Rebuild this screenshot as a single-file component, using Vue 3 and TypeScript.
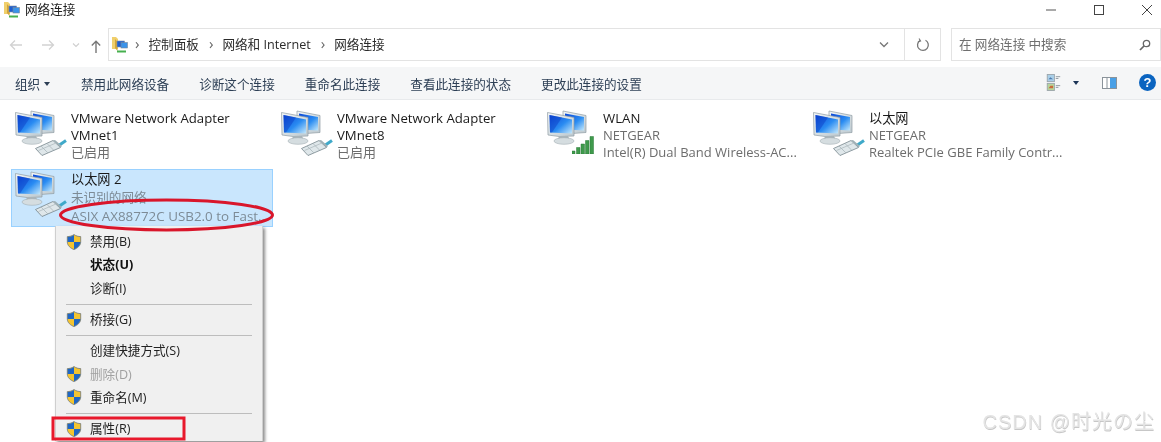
<script setup lang="ts">
interface Net { name: string[]; lines: string[]; kind: 'wired' | 'wifi'; selected?: boolean }
const nets: Net[] = [
  { name: ['VMware Network Adapter', 'VMnet1'], lines: ['已启用'], kind: 'wired' },
  { name: ['VMware Network Adapter', 'VMnet8'], lines: ['已启用'], kind: 'wired' },
  { name: ['WLAN'], lines: ['NETGEAR', 'Intel(R) Dual Band Wireless-AC...'], kind: 'wifi' },
  { name: ['以太网'], lines: ['NETGEAR', 'Realtek PCIe GBE Family Contr...'], kind: 'wired' },
  { name: ['以太网 2'], lines: ['未识别的网络', 'ASIX AX88772C USB2.0 to Fast...'], kind: 'wired', selected: true },
]
const tools = ['禁用此网络设备', '诊断这个连接', '重命名此连接', '查看此连接的状态', '更改此连接的设置']
type Row = { sep: true } | { sep?: false; label: string; shield?: boolean; bold?: boolean; disabled?: boolean }
const menu: Row[] = [
  { label: '禁用(B)', shield: true },
  { label: '状态(U)', bold: true },
  { label: '诊断(I)' },
  { sep: true },
  { label: '桥接(G)', shield: true },
  { sep: true },
  { label: '创建快捷方式(S)' },
  { label: '删除(D)', shield: true, disabled: true },
  { label: '重命名(M)', shield: true },
  { sep: true },
  { label: '属性(R)', shield: true },
]
</script>

<template>
  <div class="win">
    <svg width="0" height="0" class="defs">
      <defs>
        <linearGradient id="scr" x1="0" y1="0" x2="1" y2="1">
          <stop offset="0" stop-color="#0a45d8" />
          <stop offset="0.55" stop-color="#2a8cf2" />
          <stop offset="1" stop-color="#c4e8fb" />
        </linearGradient>
        <linearGradient id="bez" x1="0" y1="0" x2="1" y2="1">
          <stop offset="0" stop-color="#f2f6f8" />
          <stop offset="1" stop-color="#bcc8ce" />
        </linearGradient>
        <symbol id="pcs" viewBox="0 0 50 50">
          <path d="M17 3 40 7.500 40 24.500 26 25.500 17 23Z" fill="url(#bez)" stroke="#8f9ca3" stroke-width=".7" />
          <path d="M19 5.500 38 9 38 22.500 19 21.500Z" fill="url(#scr)" />
          <path d="M1.500 4.500 28 9.500 28 28 13 28.500 2 27Z" fill="url(#bez)" stroke="#8f9ca3" stroke-width=".7" />
          <path d="M3.500 7 26 11.500 26 25.500 4 24.500Z" fill="url(#scr)" />
          <path d="M3.500 7 16 9.500 6 24.500 4 24.500Z" fill="#0a3bc4" opacity=".45" />
          <path d="M13 28 22 28 23.500 31.500 12 31.500Z" fill="#aab5ba" />
          <ellipse cx="18" cy="33" rx="10" ry="3.300" fill="#d5dde0" stroke="#a3aeb3" stroke-width=".6" />
        </symbol>
        <symbol id="plugicon" viewBox="0 0 32 17">
          <path d="M23 7 31 1.500" stroke="#3fa9c9" stroke-width="3" fill="none" />
          <path d="M.5 9.500 18 1.500 25.500 8.500 7 16.500Z" fill="#dfe7ea" stroke="#76858b" stroke-width=".8" />
          <path d="M6 7 13 14M12 4.500 19 11.500" stroke="#a3b0b5" stroke-width=".7" fill="none" />
          <path d="M3.500 11.500 20.500 4.200" stroke="#aab6ba" stroke-width=".7" fill="none" />
          <path d="M18 1.500 25.500 8.500 27 7 20 1Z" fill="#9fb0b6" />
        </symbol>
        <symbol id="bars" viewBox="0 0 22 18">
          <path d="M0 15h3v3H0ZM4.500 11.500h3.500V18H4.500ZM9 8h3.500v10H9ZM13.500 4.500H17V18h-3.500ZM18 .5h3.500V18H18Z" fill="#3f9a4c" stroke="#2c7a39" stroke-width=".5" />
        </symbol>
        <symbol id="shield" viewBox="0 0 16 16">
          <path d="M8 .5C6 2 3.500 2.600 1.300 2.600V8C1.300 11.600 4.500 14.200 8 15.600 11.500 14.200 14.700 11.600 14.700 8V2.600C12.500 2.600 10 2 8 .5Z" fill="#f4c430" stroke="#5f6b7a" stroke-width=".7" />
          <path d="M8 1V8H1.600V2.900C3.800 2.900 6.200 2.300 8 1Z" fill="#1f66c4" />
          <path d="M8 8H14.400C14.300 11.200 11.400 13.900 8 15.200Z" fill="#1f66c4" />
        </symbol>
        <symbol id="folder" viewBox="0 0 16 18">
          <path d="M0 1h4l2 2v10H0Z" fill="#f0cf6c" />
          <path d="M3 3 5.500 6v9L3 12Z" fill="#d2a53a" />
          <rect x="5" y="5" width="7.500" height="6" fill="#1f5fd0" stroke="#8793a0" stroke-width=".6" />
          <rect x="9" y="6.500" width="6.500" height="5.500" fill="#3a93ea" stroke="#7b8794" stroke-width=".6" />
          <path d="M5 15.500h9" stroke="#46b04f" stroke-width="2" />
        </symbol>
      </defs>
    </svg>

    <header class="title">
      <svg class="ticon" width="16" height="18"><use href="#folder" /></svg>
      <span class="ttext">网络连接</span>
      <div class="controls">
        <svg width="12" height="12" viewBox="0 0 12 12"><path d="M1 6h10" stroke="#555" /></svg>
        <svg width="12" height="12" viewBox="0 0 12 12"><rect x="1.500" y="1.500" width="9" height="9" fill="none" stroke="#444" /></svg>
        <svg width="12" height="12" viewBox="0 0 12 12"><path d="M1 1 11 11M11 1 1 11" stroke="#444" /></svg>
      </div>
    </header>

    <div class="addr">
      <div class="nav">
        <svg width="14" height="12" viewBox="0 0 14 12"><path d="M13 6H2M6 1.500 1.500 6 6 10.500" fill="none" stroke="#d2d2d2" stroke-width="1.300" /></svg>
        <svg width="14" height="12" viewBox="0 0 14 12"><path d="M1 6h11M8 1.500 12.500 6 8 10.500" fill="none" stroke="#d2d2d2" stroke-width="1.300" /></svg>
        <svg class="dd" width="8" height="6" viewBox="0 0 8 6"><path d="M1 1.500 4 4.500 7 1.500" fill="none" stroke="#cfcfcf" stroke-width="1.100" /></svg>
        <svg class="up" width="10" height="13" viewBox="0 0 10 13"><path d="M5 13V1.500M.8 5.500 5 1.200 9.200 5.500" fill="none" stroke="#777" stroke-width="1.400" /></svg>
      </div>
      <div class="box">
        <svg class="crumbicon" width="16" height="18"><use href="#folder" /></svg>
        <span class="chev">›</span><span>控制面板</span>
        <span class="chev">›</span><span>网络和 Internet</span>
        <span class="chev">›</span><span>网络连接</span>
        <div class="boxend">
          <svg class="down" width="10" height="7" viewBox="0 0 10 7"><path d="M1 1.500 5 5.500 9 1.500" fill="none" stroke="#777" stroke-width="1.300" /></svg>
          <div class="refresh">
            <svg width="14" height="14" viewBox="0 0 14 14"><path d="M9.500 2.300A5.400 5.400 0 1 1 4 2.500" fill="none" stroke="#777" stroke-width="1.300" /><path d="M3 .5 4.600 3 2 4" fill="none" stroke="#777" stroke-width="1.100" /></svg>
          </div>
        </div>
      </div>
      <div class="search">
        <span>在 网络连接 中搜索</span>
        <svg width="12" height="12" viewBox="0 0 12 12"><circle cx="7.500" cy="4.500" r="3.200" fill="none" stroke="#666" stroke-width="1.300" /><path d="M5 7 1 11" stroke="#666" stroke-width="1.700" /></svg>
      </div>
    </div>

    <nav class="tools">
      <span class="org">组织<i class="caret"></i></span>
      <span v-for="t in tools" :key="t">{{ t }}</span>
      <div class="toolend">
        <svg class="views" width="15" height="17" viewBox="0 0 15 19">
          <rect x=".5" y=".5" width="8" height="8" fill="#a9cfe8" stroke="#9aa4ab" />
          <path d="M2 6 4 3.500 7 6Z" fill="#4c79b0" />
          <rect x=".5" y="10.500" width="8" height="8" fill="#b7d59a" stroke="#9aa4ab" />
          <path d="M2 16 4 13h3v3Z" fill="#c96a3a" />
          <path d="M10 3h5M10 5h3M10 13h5M10 15h3" stroke="#8a939a" />
        </svg>
        <i class="caret dark"></i>
        <svg class="pane" width="15" height="12" viewBox="0 0 15 12">
          <rect x=".5" y=".5" width="14" height="11" fill="#fff" stroke="#8a939a" />
          <rect x="8" y="1" width="6" height="10" fill="#4aa0e6" />
          <path d="M5 1v10" stroke="#8a939a" />
        </svg>
        <span class="help">?</span>
      </div>
    </nav>

    <main class="grid">
      <div v-for="n in nets" :key="n.name.join()" class="item" :class="{ sel: n.selected }">
        <div class="iconbox">
          <svg width="50" height="50"><use href="#pcs" /></svg>
          <svg v-if="n.kind === 'wired'" class="plug" width="32" height="17"><use href="#plugicon" /></svg>
          <svg v-else class="wifi" width="22" height="18"><use href="#bars" /></svg>
        </div>
        <div class="txt">
          <div v-for="l in n.name" :key="l" class="nm">{{ l }}</div>
          <div v-for="l in n.lines" :key="l" class="sub">{{ l }}</div>
        </div>
      </div>
    </main>

    <div class="menu">
      <template v-for="(r, i) in menu" :key="i">
        <div v-if="r.sep" class="sep"></div>
        <div v-else class="mi" :class="{ bold: r.bold, dis: r.disabled }">
          <svg v-if="r.shield" class="sh" width="16" height="16"><use href="#shield" /></svg>
          <span>{{ r.label }}</span>
        </div>
      </template>
    </div>

    <svg class="marks" width="1161" height="442" viewBox="0 0 1161 442">
      <ellipse cx="166.500" cy="215" rx="106" ry="15" fill="none" stroke="#d9162b" stroke-width="3" />
      <rect x="53" y="418" width="131" height="21" fill="none" stroke="#e8192c" stroke-width="3" />
    </svg>

    <div class="wm">CSDN @时光の尘</div>
  </div>
</template>

<style scoped>
.win {
  position: relative;
  width: 1161px;
  height: 442px;
  overflow: hidden;
  background: #fff;
  color: #1e1e1e;
  font: 12.6px/17px "Open Sans", "Noto Sans CJK SC", sans-serif;
  filter: blur(0.4px);
}
.defs { position: absolute; }
.title {
  height: 20px;
  box-sizing: border-box;
  display: flex;
  align-items: center;
  padding: 0 0 1px 4px;
}
.ticon { margin-right: 5px; }
.controls {
  margin-left: auto;
  display: flex;
  gap: 36px;
  padding-right: 8px;
}
.addr {
  height: 47px;
  display: flex;
  padding-top: 8px;
  box-sizing: border-box;
  align-items: flex-start;
}
.nav {
  width: 108px;
  height: 33px;
  display: flex;
  align-items: center;
  padding-left: 9px;
  box-sizing: border-box;
  gap: 18px;
}
.dd { margin-left: -1px; margin-right: -7px; }
.up { margin-top: 3px; }
.box {
  width: 833px;
  height: 33px;
  box-sizing: border-box;
  border: 1px solid #e3e3e3;
  display: flex;
  align-items: center;
  padding-left: 3px;
  color: #2b2b2b;
}
.crumbicon { margin-right: 7px; }
.chev { color: #666; font-size: 15px; margin: -2px 9px 0 0; }
.box > span:not(.chev) { margin-right: 10px; }
.boxend {
  margin-left: auto;
  display: flex;
  align-items: center;
  height: 100%;
}
.down { margin-right: 15px; }
.refresh {
  width: 35px;
  height: 100%;
  border-left: 1px solid #e3e3e3;
  display: flex;
  align-items: center;
  justify-content: center;
}
.search {
  margin-left: 10px;
  flex: 1;
  height: 33px;
  box-sizing: border-box;
  border: 1px solid #e3e3e3;
  display: flex;
  align-items: center;
  justify-content: space-between;
  padding: 0 9px 0 7px;
  color: #6f6f6f;
}
.tools {
  height: 33px;
  box-sizing: border-box;
  background: #f5f6f7;
  border-bottom: 1px solid #e8eaec;
  display: flex;
  align-items: center;
  gap: 30px;
  padding: 2px 0 0 15px;
  color: #2d3f55;
}
.org { display: flex; align-items: center; width: 36px; }
.caret {
  display: inline-block;
  margin-left: 4px;
  border: 3.500px solid transparent;
  border-top: 4px solid #2d3f55;
  border-bottom: 0;
}
.toolend {
  margin-left: auto;
  display: flex;
  align-items: center;
  padding: 0 5px 3px 0;
}
.caret.dark { margin: 0 0 0 12px; border-top-color: #1c3557; }
.pane { margin-left: 23px; }
.help {
  margin-left: 22px;
  width: 17px;
  height: 17px;
  border-radius: 50%;
  background: #0b64c0;
  color: #fff;
  font: bold 13px/17px "Liberation Sans", sans-serif;
  text-align: center;
}
.grid {
  display: grid;
  grid-template-columns: repeat(4, 262px);
  column-gap: 4px;
  row-gap: 4px;
  padding: 9px 0 0 11px;
}
.item {
  position: relative;
  display: flex;
  height: 56px;
  box-sizing: border-box;
  border: 1px solid transparent;
  padding-left: 2px;
}
.item.sel {
  height: 58px;
  background: #c9e6fd;
  border-color: #99d1ff;
}
.iconbox { position: relative; width: 50px; height: 50px; margin: -2px 7px 0 0; flex: none; }
.plug { position: absolute; left: 21px; top: 31px; }
.wifi { position: absolute; left: 26px; top: 28px; }
.sel .iconbox { margin-top: -1px; }
.txt { white-space: nowrap; }
.sel .txt { line-height: 18.500px; }
.sel .sub { color: #7d8b96; font-size: 12.600px; }
.sel .sub:last-child { font-size: 13.400px; }
.nm { color: #1a1a1a; font-size: 13.200px; }
.sub { color: #6d6d6d; font-size: 13px; }
.menu {
  position: absolute;
  left: 55px;
  top: 226px;
  width: 208px;
  box-sizing: border-box;
  padding-top: 4px;
  background: #f0f0f0;
  border: 1px solid #cfcfcf;
  border-width: 0 1px;
  box-shadow: 2px 2px 3px rgba(0, 0, 0, 0.45);
}
.mi {
  position: relative;
  height: 23.330px;
  line-height: 24px;
  padding-left: 34px;
  color: #222;
}
.mi.bold { font-weight: 700; color: #111; }
.mi.dis { color: #a0a0a0; }
.sh { position: absolute; left: 10px; top: 3.500px; }
.sep { height: 8px; position: relative; }
.sep::after {
  content: "";
  position: absolute;
  left: 10px;
  right: 10px;
  top: 4px;
  height: 1px;
  background: #bdbdbd;
}
.marks { position: absolute; left: 0; top: 0; pointer-events: none; }
.wm {
  position: absolute;
  right: 6px;
  top: 411px;
  font: 20px/22px "Liberation Sans", "Noto Sans CJK JP", sans-serif;
  letter-spacing: 1px;
  color: #e4e4e4;
  text-shadow: 0.5px 0.5px 0.5px rgba(130, 130, 130, 0.45);
}
</style>
